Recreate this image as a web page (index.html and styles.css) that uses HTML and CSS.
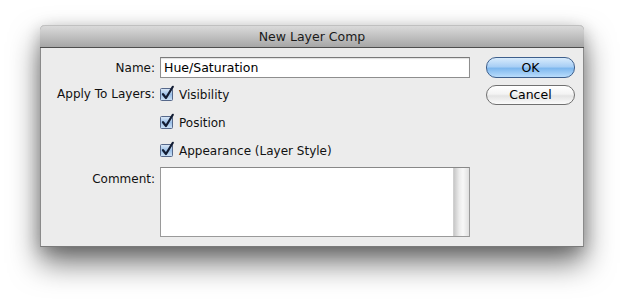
FILE: index.html
```html
<!DOCTYPE html>
<html>
<head>
<meta charset="utf-8">
<link rel="stylesheet" href="styles.css">
</head>
<body>
<div class="window">
  <div class="titlebar">New Layer Comp</div>
  <div class="content">
    <div class="form">
      <div class="label label-name">Name:</div>
      <div class="ctl ctl-name"><input class="text" type="text" value="Hue/Saturation"></div>

      <div class="label">Apply To Layers:</div>
      <div class="ctl"><span class="check"><svg width="16" height="16" viewBox="0 0 16 16"><defs><linearGradient id="cb" x1="0" y1="0" x2="0" y2="1"><stop offset="0" stop-color="#dde9f7"/><stop offset="0.5" stop-color="#9cc0e8"/><stop offset="1" stop-color="#cfe3f7"/></linearGradient></defs><rect x="0.5" y="3.5" width="12" height="12" rx="1" fill="url(#cb)" stroke="#56688a"/><path d="M3 9.2 L6 13 L12.8 1.8" fill="none" stroke="#121c33" stroke-width="2.2" stroke-linecap="round" stroke-linejoin="round"/></svg></span>Visibility</div>

      <div class="label"></div>
      <div class="ctl"><span class="check"><svg width="16" height="16" viewBox="0 0 16 16"><rect x="0.5" y="3.5" width="12" height="12" rx="1" fill="url(#cb)" stroke="#56688a"/><path d="M3 9.2 L6 13 L12.8 1.8" fill="none" stroke="#121c33" stroke-width="2.2" stroke-linecap="round" stroke-linejoin="round"/></svg></span>Position</div>

      <div class="label"></div>
      <div class="ctl"><span class="check"><svg width="16" height="16" viewBox="0 0 16 16"><rect x="0.5" y="3.5" width="12" height="12" rx="1" fill="url(#cb)" stroke="#56688a"/><path d="M3 9.2 L6 13 L12.8 1.8" fill="none" stroke="#121c33" stroke-width="2.2" stroke-linecap="round" stroke-linejoin="round"/></svg></span>Appearance (Layer Style)</div>

      <div class="label label-comment">Comment:</div>
      <div class="ctl ctl-comment"><div class="textarea"><div class="ta-body"></div><div class="ta-scroll"></div></div></div>
    </div>
    <div class="buttons">
      <div class="btn btn-default">OK</div>
      <div class="btn">Cancel</div>
    </div>
  </div>
</div>
</body>
</html>
```
FILE: styles.css
```css
html, body {
  margin: 0;
  padding: 0;
  background: #ffffff;
}
body {
  height: 302px;
  box-sizing: border-box;
  padding: 25px 0 0 40px;
  overflow: hidden;
  font-family: "DejaVu Sans", "Liberation Sans", sans-serif;
  font-size: 12px;
  color: #111;
}
.window {
  width: 544px;
  height: 222px;
  box-sizing: border-box;
  background: #ececec;
  border: 1px solid #8a8a8a;
  border-top: none;
  border-bottom-color: #7a7a7a;
  border-radius: 5px 5px 0 0;
  box-shadow: 0 16px 30px rgba(0,0,0,0.55), 0 4px 16px rgba(0,0,0,0.2);
  display: flex;
  flex-direction: column;
}
.titlebar {
  margin: 0 -1px;
  border-radius: 5px 5px 0 0;
  background: linear-gradient(#dadada, #c6c6c6 40%, #a6a6a6);
  border-top: 1px solid #c0c0c0;
  border-bottom: 1px solid #4e4e4e;
  text-align: center;
  line-height: 21px;
  font-size: 12.5px;
  color: #1a1a1a;
  height: 21px;
}
.content {
  display: flex;
  padding-top: 9px;
}
.form {
  display: grid;
  grid-template-columns: 114px 310px;
  grid-template-rows: 23px 28px 28px 28px 73px;
  column-gap: 5px;
}
.label {
  text-align: right;
  display: flex;
  align-items: center;
  justify-content: flex-end;
}
.label-name {
  height: 21px;
}
.label-comment {
  align-items: flex-start;
  padding-top: 8px;
}
.ctl {
  display: flex;
  align-items: center;
  padding-top: 1px;
}
.ctl-name {
  align-items: flex-start;
  padding-top: 0;
}
.text {
  width: 310px;
  height: 21px;
  box-sizing: border-box;
  border: 1px solid #8e8e8e;
  border-top-color: #7a7a7a;
  background: #fff;
  font: inherit;
  font-size: 12.5px;
  color: #000;
  padding: 0 3px;
  margin: 0;
  outline: none;
  box-shadow: inset 0 1px 1px rgba(0,0,0,0.12);
}
.check {
  width: 16px;
  height: 16px;
  margin-right: 3px;
  margin-top: -3px;
  display: inline-flex;
}
.ctl-comment {
  align-items: flex-start;
  padding-top: 3px;
}
.textarea {
  width: 310px;
  height: 70px;
  box-sizing: border-box;
  border: 1px solid #9a9a9a;
  border-top-color: #888;
  background: #fff;
  display: flex;
}
.ta-body {
  flex: 1;
}
.ta-scroll {
  width: 15px;
  background: linear-gradient(90deg, #c8c8c8, #ececec 35%, #f8f8f8 60%, #e0e0e0);
  border-left: 1px solid #d0d0d0;
}
.buttons {
  display: flex;
  flex-direction: column;
  gap: 7px;
  margin-left: 16px;
}
.btn {
  width: 89px;
  height: 20px;
  box-sizing: border-box;
  border: 1px solid #707070;
  border-radius: 10px;
  background: linear-gradient(#ffffff, #f3f3f3 45%, #e4e4e4 55%, #fbfbfb);
  text-align: center;
  line-height: 18px;
  font-size: 12.5px;
  color: #000;
}
.btn-default {
  height: 21px;
  line-height: 19px;
  border-color: #3e5f8c;
  background: linear-gradient(#d8ebfc, #a9cff5 45%, #7fb8ee 55%, #b9dcfb);
}
```
